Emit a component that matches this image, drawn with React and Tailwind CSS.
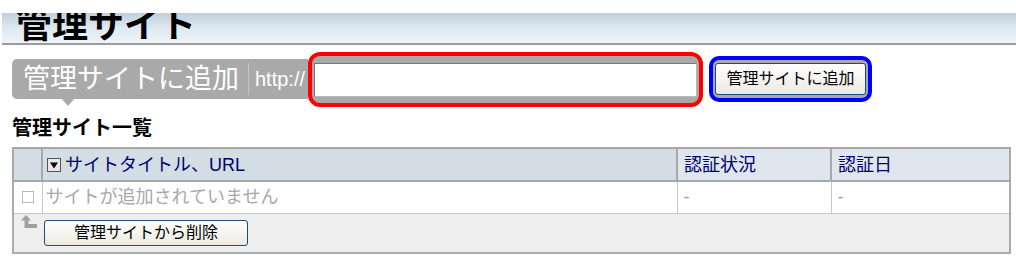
const FONT = { fontFamily: '"Liberation Sans", "Noto Sans CJK JP", sans-serif' };

function SortIcon() {
  return (
    <span className="mr-[4px] inline-flex h-[14px] w-[14px] items-center justify-center border border-[#555] bg-[#e8e8e8]">
      <svg width="10" height="10" viewBox="0 0 10 10">
        <path d="M1 2.5h8L5 8.5z" fill="#000" />
      </svg>
    </span>
  );
}

function UpArrow() {
  return (
    <svg width="18" height="16" viewBox="0 0 18 16">
      <path d="M6 1L1 6.5h3.5V14H17v-4H8.5V6.5H11z" fill="#a0a0a0" />
    </svg>
  );
}

export default function App() {
  return (
    <div className="h-[267px] w-[1016px] overflow-hidden bg-white" style={FONT}>
      <div className="ml-[2px] mt-[13px] h-[32px] overflow-hidden border-b-2 border-[#9a9a9a] bg-gradient-to-b from-[#bfcfdb] via-[#dfe9f1] to-[#eef4fa]">
        <h1 className="-mt-[9px] ml-[14px] text-[36px] font-bold leading-[44px] text-black">管理サイト</h1>
      </div>

      <div className="ml-[12px] mt-[7px] flex items-start">
        <div className="relative mt-[7px] flex h-[40px] w-[296px] items-center rounded-l-[5px] bg-[#a9a9a9] text-white">
          <span className="pl-[11px] text-[27px] leading-none">管理サイトに追加</span>
          <span className="ml-[9px] h-[32px] border-l border-[#c6c6c6]" />
          <span className="ml-[6px] text-[20px]">http://</span>
          <span className="absolute left-[49px] top-[39px] h-0 w-0 border-x-[7px] border-t-[8px] border-x-transparent border-t-[#a9a9a9]" />
        </div>
        <div className="flex h-[55px] w-[395px] items-center rounded-[12px] border-[4px] border-[#ff0000] bg-[#a9a9a9] pl-[2px] pr-[2px]">
          <div className="h-[34px] w-full border border-t-[#7a7a7a] border-l-[#7a7a7a] border-b-[#b8b8b8] border-r-[#b8b8b8] bg-white" />
        </div>
        <div className="ml-[6px] mt-[4px] flex h-[46px] w-[163px] items-center justify-center rounded-[10px] border-[4px] border-[#0000ff] bg-[#a9a9a9]">
          <button className="h-[32px] w-[151px] rounded-[3px] border border-[#1c4a7a] bg-gradient-to-b from-white to-[#ece9e0] text-[16px] text-black">
            管理サイトに追加
          </button>
        </div>
      </div>

      <h2 className="ml-[12px] mt-[9px] text-[20px] font-bold leading-[24px] text-black">管理サイト一覧</h2>

      <table className="ml-[12px] mt-[7px] w-[999px] border-collapse border-2 border-[#ababab] text-[18px]">
        <thead>
          <tr className="h-[33px]">
            <th className="w-[29px] border-2 border-[#a8a8a8] bg-[#d3dde4]" />
            <th className="border-2 border-[#a8a8a8] bg-[#d3dde4] px-[4px] text-left font-normal leading-[24px] text-[#000070]">
              <span className="flex items-center">
                <SortIcon />
                サイトタイトル、URL
              </span>
            </th>
            <th className="w-[154px] border-2 border-[#a8a8a8] bg-[#dfe6ed] px-[6px] text-left font-normal leading-[24px] text-[#000070]">認証状況</th>
            <th className="w-[179px] border-2 border-[#a8a8a8] bg-[#dfe6ed] px-[6px] text-left font-normal leading-[24px] text-[#000070]">認証日</th>
          </tr>
        </thead>
        <tbody>
          <tr className="h-[32px] bg-white leading-[24px]">
            <td className="border border-[#c8c8c8] text-center">
              <span className="mx-auto block h-[12px] w-[12px] border border-[#b8b8b8]" />
            </td>
            <td className="border border-[#c8c8c8] px-[3px] text-[#a8a8a8]">サイトが追加されていません</td>
            <td className="border border-[#c8c8c8] px-[6px] text-[#a0a0a0]">-</td>
            <td className="border border-[#c8c8c8] px-[6px] text-[#a0a0a0]">-</td>
          </tr>
          <tr className="h-[40px] bg-[#eeeeee]">
            <td colSpan={4} className="px-[6px]">
              <div className="flex items-start">
                <div className="mt-[-6px]">
                  <UpArrow />
                </div>
                <button className="ml-[6px] h-[26px] w-[204px] rounded-[3px] border border-[#1c4a7a] bg-gradient-to-b from-white to-[#ece9e0] text-[16px] leading-none text-black">
                  管理サイトから削除
                </button>
              </div>
            </td>
          </tr>
        </tbody>
      </table>
    </div>
  );
}
